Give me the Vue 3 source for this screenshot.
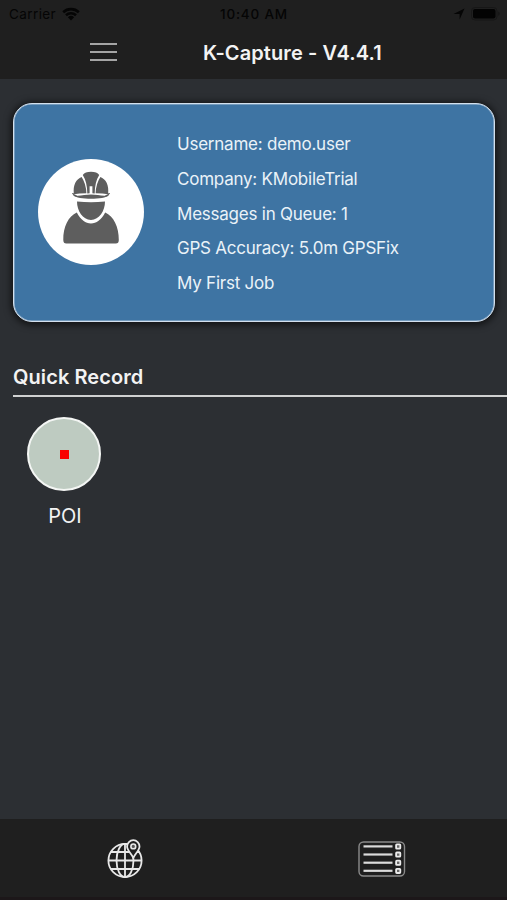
<template>
  <div class="screen">
    <header class="header">
      <div class="status-bar">
        <div class="carrier">
          <span>Carrier</span>
          <svg width="18" height="14" viewBox="0 0 18 14">
            <path d="M1.2 5.2a11.3 11.3 0 0 1 15.6 0M4 8.3a7.2 7.2 0 0 1 10 0" fill="none" stroke="#050505" stroke-width="2.6" />
            <path d="M5.9 10.3a4.5 4.5 0 0 1 6.2 0L9 13.5z" fill="#050505" />
          </svg>
        </div>
        <span class="time">10:40 AM</span>
        <div class="indicators">
          <svg width="12" height="12" viewBox="0 0 12 12">
            <path d="M11.5.5 6.6 11.5V6H.5z" fill="#050505" />
          </svg>
          <svg width="30" height="14" viewBox="0 0 30 14">
            <rect x=".5" y=".5" width="25.5" height="12.5" rx="3.5" fill="none" stroke="#171717" />
            <rect x="2" y="2" width="22.5" height="9.5" rx="2" fill="#030303" />
            <path d="M27.5 4.5q2 2.2 0 4.5z" fill="#111" />
          </svg>
        </div>
      </div>
      <div class="nav-bar">
        <button class="menu" aria-label="Menu">
          <span></span>
          <span></span>
          <span></span>
        </button>
        <h1>K-Capture - V4.4.1</h1>
      </div>
    </header>

    <main class="content">
      <section class="card">
        <div class="avatar">
          <svg width="58" height="74" viewBox="0 0 58 74">
            <g fill="#5e5e5e">
              <path d="M12 23.2C10.5 14 14.5 7.8 19.6 6Q24 12.5 24.4 22.2Q17 22.2 12 23.2Z" />
              <path d="M20.8 4Q23 .9 29 .8q6 .1 8.2 3.2-4.4 7-4.5 18.4l-2.3-.2v-7h-2.8v7l-2.3.2q-.1-11.4-4.5-18.4Z" />
              <path d="M38.4 6C43.5 7.8 47.5 14 46 23.2Q41 22.2 33.6 22.2q.4-9.7 4.8-16.2Z" />
              <path d="M11 24.2C17 25.6 22.5 23.6 29 23.6s12 2 18 .6C42 29 16 29 11 24.2Z" />
              <path d="M15 30.6Q29 32 43 30.6C43 40 37.2 49 29 49S15 40 15 30.6Z" />
              <path d="M14.8 41.5C19 49 23.5 52.5 29 52.5S39 49 43.2 41.5C51.5 45 57 56 56.8 69q0 3.5-3 3.5H4.3q-3 0-3-3.5C1 56 6.5 45 14.8 41.5Z" />
            </g>
            <path d="M10.6 22q1 2.5 4 3M47.4 22q-1 2.5-4 3" fill="none" stroke="#5e5e5e" stroke-width="1.4" />
          </svg>
        </div>
        <ul class="details">
          <li v-for="(line, i) in details" :key="i">{{ line }}</li>
        </ul>
      </section>

      <section class="records">
        <h2>Quick Record</h2>
        <div class="record">
          <div class="record-icon">
            <span class="point"></span>
          </div>
          <span class="record-label">POI</span>
        </div>
      </section>
    </main>

    <footer class="tab-bar">
      <button class="tab" aria-label="Map">
        <svg width="40" height="40" viewBox="0 0 40 40">
          <g fill="none" stroke="#e8e8e8" stroke-width="1.8">
            <circle cx="19" cy="21.5" r="16.6" />
            <ellipse cx="19" cy="21.5" rx="8.5" ry="16.6" />
            <path d="M19 5v33M2.4 21.5h33M5 13h28M5 30h28" />
          </g>
          <path d="M27.3 1.2a6.2 6.2 0 0 0-6.2 6.2c0 3.9 3.9 6.7 6.2 11.4 2.3-4.7 6.2-7.5 6.2-11.4a6.2 6.2 0 0 0-6.2-6.2Z" fill="#1f1f1f" stroke="#e8e8e8" stroke-width="1.8" />
          <circle cx="27.3" cy="7.4" r="2.4" fill="#555" stroke="#e8e8e8" stroke-width="1.6" />
        </svg>
      </button>
      <button class="tab" aria-label="Messages">
        <svg width="48" height="36" viewBox="0 0 48 36">
          <rect x="1" y="1" width="45.5" height="34" rx="4.5" fill="none" stroke="#8a8a8a" stroke-width="1.4" />
          <g v-for="y in listRows" :key="y">
            <path :d="`M5.5 ${y}h29`" stroke="#dcdcdc" stroke-width="2.2" />
            <rect x="38.1" :y="y - 2" width="4.2" height="4.2" rx=".7" fill="#666" stroke="#ececec" stroke-width="1.8" />
          </g>
        </svg>
      </button>
    </footer>
  </div>
</template>

<script setup>
const details = [
  'Username: demo.user',
  'Company: KMobileTrial',
  'Messages in Queue: 1',
  'GPS Accuracy: 5.0m GPSFix',
  'My First Job'
]

const listRows = [5.4, 13.5, 21.7, 29.8]
</script>

<style>
body {
  background: #2c2f33;
}
</style>

<style scoped>
.screen {
  display: flex;
  flex-direction: column;
  height: 100vh;
  overflow: hidden;
  background: #2c2f33;
  color: #f3f3f3;
  font-family: Inter, 'Liberation Sans', sans-serif;
}

h1,
h2,
ul {
  margin: 0;
  padding: 0;
}

button {
  padding: 0;
  border: none;
  background: none;
}

svg {
  display: block;
}

.header {
  height: 79px;
  flex-shrink: 0;
  background: #1f1f1f;
}

.status-bar {
  display: grid;
  grid-template-columns: 1fr auto 1fr;
  align-items: center;
  height: 27px;
  padding: 0 6px 0 9px;
  color: #050505;
  font-size: 13.5px;
}

.carrier {
  display: flex;
  align-items: center;
  gap: 6px;
  letter-spacing: 0.4px;
}

.time {
  margin-right: 2px;
  font-weight: 500;
  letter-spacing: 0.8px;
}

.indicators {
  display: flex;
  align-items: center;
  justify-content: flex-end;
  gap: 6px;
}

.nav-bar {
  display: flex;
  align-items: center;
  height: 50px;
  padding-left: 90px;
}

.menu {
  display: flex;
  flex-direction: column;
  gap: 6px;
  width: 27px;
  margin-right: 86px;
}

.menu span {
  height: 2px;
  background: #a5a5a5;
}

h1 {
  padding-top: 1px;
  font-size: 20px;
  font-weight: 600;
  letter-spacing: 0.1px;
  line-height: 26px;
  white-space: nowrap;
}

.content {
  flex: 1;
  padding: 24px 0 0 13px;
}

.card {
  display: flex;
  align-items: center;
  box-sizing: border-box;
  height: 219px;
  margin-right: 12px;
  padding-left: 24px;
  border: 1px solid #d3e0ed;
  border-radius: 19px;
  background: #3e74a3;
  box-shadow: inset 0 0 0 0.5px #a9c1d8, 0 1px 7px 2px rgba(0, 0, 0, 0.6);
}

.avatar {
  display: flex;
  justify-content: center;
  width: 106px;
  height: 106px;
  box-sizing: border-box;
  padding-top: 12px;
  margin: 0 33px 1px 0;
  border-radius: 50%;
  background: #fff;
}

.details {
  padding-top: 3px;
  list-style: none;
  font-size: 17px;
  letter-spacing: -0.23px;
  line-height: 34.7px;
  color: #eaf2f8;
  white-space: nowrap;
}

.records {
  padding-top: 41px;
}

h2 {
  height: 32px;
  border-bottom: 2px solid #d0d1d1;
  font-size: 20px;
  font-weight: 600;
  letter-spacing: 0.08px;
  line-height: 28px;
}

.record {
  display: flex;
  flex-direction: column;
  align-items: center;
  width: 74px;
  margin: 20px 0 0 14px;
}

.record-icon {
  display: flex;
  align-items: center;
  justify-content: center;
  box-sizing: border-box;
  width: 74px;
  height: 74px;
  border: 2px solid #f4f6f4;
  border-radius: 50%;
  background: #becbc1;
}

.point {
  width: 9px;
  height: 9px;
  background: #f90000;
}

.record-label {
  padding-left: 2px;
  margin-top: 12px;
  font-size: 20px;
  line-height: 26px;
}

.tab-bar {
  display: flex;
  justify-content: space-between;
  height: 81px;
  flex-shrink: 0;
  box-sizing: border-box;
  padding-top: 2px;
  border-bottom: 3px solid #1c1719;
  background: #1f1f1f;
}

.tab {
  display: flex;
  width: 251px;
  align-items: center;
  justify-content: center;
}
</style>
